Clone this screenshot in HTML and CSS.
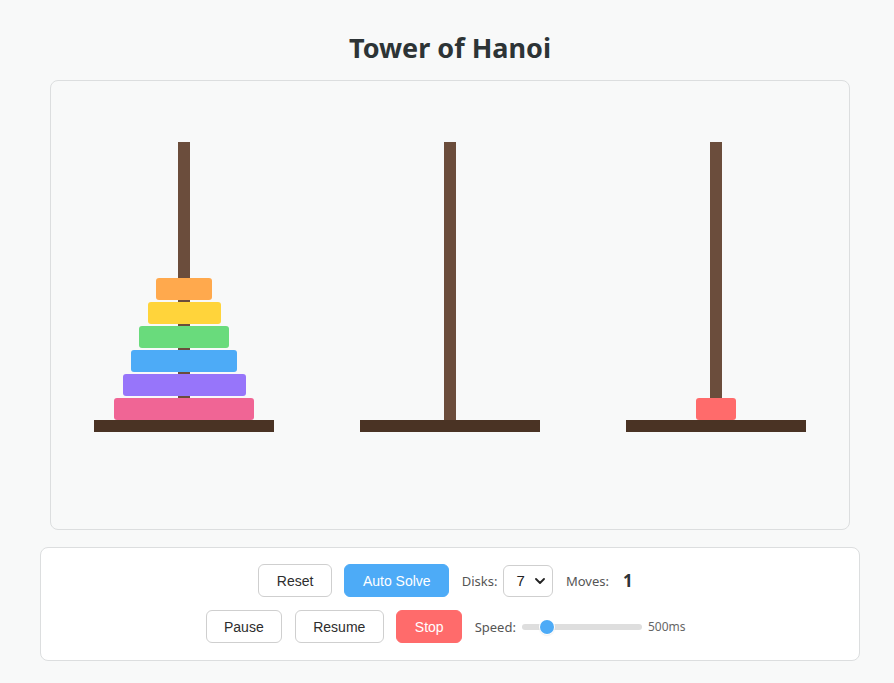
FILE: index.html
```html
<!DOCTYPE html>
<html lang="en">
<head>
<meta charset="utf-8">
<title>Tower of Hanoi</title>
<link rel="stylesheet" href="styles.css">
</head>
<body>
<div class="app">
  <h1 class="title">Tower of Hanoi</h1>
  <div class="board">
    <div class="peg">
      <div class="tower">
        <div class="pole"></div>
        <div class="stack">
          <div class="disk orange" style="width:56px"></div>
          <div class="disk yellow" style="width:73px"></div>
          <div class="disk green" style="width:90px"></div>
          <div class="disk blue" style="width:106px"></div>
          <div class="disk purple" style="width:123px"></div>
          <div class="disk pink" style="width:140px"></div>
        </div>
      </div>
      <div class="base"></div>
    </div>
    <div class="peg">
      <div class="tower">
        <div class="pole"></div>
        <div class="stack"></div>
      </div>
      <div class="base"></div>
    </div>
    <div class="peg">
      <div class="tower">
        <div class="pole"></div>
        <div class="stack">
          <div class="disk red" style="width:40px"></div>
        </div>
      </div>
      <div class="base"></div>
    </div>
  </div>
  <div class="controls">
    <div class="row">
      <button class="btn">Reset</button>
      <button class="btn btn-primary">Auto Solve</button>
      <label class="field"><span class="label">Disks:</span>
        <span class="select">7<svg class="chev" viewBox="0 0 10 6" width="10" height="6"><path d="M1 1 L5 5 L9 1" fill="none" stroke="#222" stroke-width="1.8" stroke-linecap="round" stroke-linejoin="round"/></svg></span>
      </label>
      <span class="field"><span class="label">Moves:</span><span class="moves">1</span></span>
    </div>
    <div class="row">
      <button class="btn">Pause</button>
      <button class="btn">Resume</button>
      <button class="btn btn-danger">Stop</button>
      <span class="field speed"><span class="label">Speed:</span>
        <span class="slider"><span class="track"></span><span class="thumb" style="left:18px"></span></span>
        <span class="ms">500ms</span>
      </span>
    </div>
  </div>
</div>
</body>
</html>
```
FILE: styles.css
```css
* { box-sizing: border-box; }
html, body { margin: 0; padding: 0; }
body {
  background: #f8f9f9;
  font-family: "Noto Sans", "Open Sans", "Liberation Sans", sans-serif;
  color: #2d3436;
  padding-left: 6px;
}
.app {
  width: 820px;
  margin: 0 auto;
  display: flex;
  flex-direction: column;
  align-items: center;
}
.title {
  margin: 29px 0 13px;
  font-size: 27px;
  line-height: 38px;
  font-weight: 700;
  color: #2d3436;
}
.board {
  width: 800px;
  height: 450px;
  border: 1px solid #dcdedf;
  border-radius: 8px;
  background: #f8f9f9;
  display: flex;
  padding-top: 61px;
}
.peg {
  flex: 1;
  display: flex;
  flex-direction: column;
  align-items: center;
}
.tower {
  display: grid;
  width: 180px;
  height: 278px;
  justify-items: center;
}
.pole {
  grid-area: 1 / 1;
  width: 12px;
  height: 278px;
  background: #6b4d3c;
}
.stack {
  grid-area: 1 / 1;
  align-self: end;
  display: flex;
  flex-direction: column;
  align-items: center;
  gap: 2px;
}
.disk {
  height: 22px;
  border-radius: 3px;
}
.red { background: #ff6b6b; }
.orange { background: #ffa94d; }
.yellow { background: #ffd43b; }
.green { background: #69db7c; }
.blue { background: #4dabf7; }
.purple { background: #9775fa; }
.pink { background: #f06595; }
.base {
  width: 180px;
  height: 12px;
  background: #4a3324;
}
.controls {
  margin-top: 17px;
  width: 820px;
  background: #ffffff;
  border: 1px solid #dcdedf;
  border-radius: 8px;
  padding: 16px 9px 17px 0;
  display: flex;
  flex-direction: column;
  gap: 13px;
  align-items: center;
}
.row {
  display: flex;
  align-items: center;
  gap: 12.5px;
  height: 33px;
}
.btn {
  font-family: "Liberation Sans", Arial, sans-serif;
  font-size: 14px;
  line-height: 16px;
  padding: 7px 17.5px;
  height: 33px;
  border: 1px solid #cfcfcf;
  border-radius: 6px;
  background: #fff;
  color: #2d2d2d;
}
.btn-primary {
  background: #4dabf7;
  border-color: #4dabf7;
  color: #fff;
}
.btn-danger {
  background: #ff6b6b;
  border-color: #ff6b6b;
  color: #fff;
}
.field {
  display: flex;
  align-items: center;
  gap: 6px;
}
.label {
  font-size: 13px;
  color: #555;
}
.select {
  width: 50px;
  height: 32px;
  border: 1px solid #cfcfcf;
  border-radius: 6px;
  background: #fff;
  display: flex;
  align-items: center;
  justify-content: space-between;
  padding: 0 7px 0 12px;
  font-family: "Liberation Sans", Arial, sans-serif;
  font-size: 15px;
  color: #222;
}
.moves {
  margin-left: 8px;
  font-weight: 700;
  font-size: 17px;
  color: #2d3436;
}
.speed { gap: 6px; }
.slider {
  position: relative;
  width: 120px;
  height: 16px;
  display: flex;
  align-items: center;
}
.track {
  width: 100%;
  height: 6px;
  border-radius: 3px;
  background: #dedede;
}
.thumb {
  position: absolute;
  top: 1px;
  width: 14px;
  height: 14px;
  border-radius: 50%;
  background: #4dabf7;
  box-shadow: 0 0 0 1px #fff, 0 1px 2px rgba(0,0,0,0.2);
}
.ms {
  font-size: 12px;
  color: #666;
}
```
